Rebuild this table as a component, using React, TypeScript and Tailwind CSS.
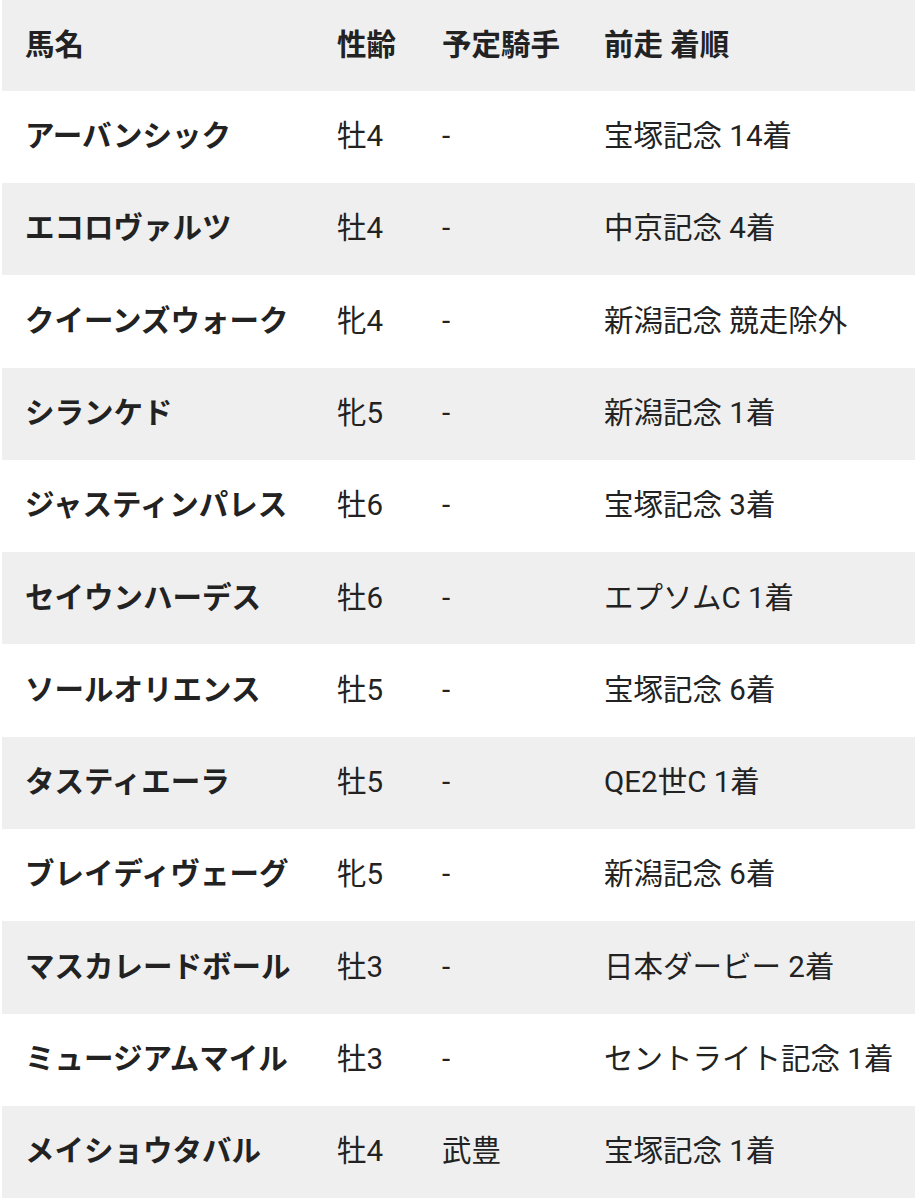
const rows = [
  { name: "アーバンシック", age: "牡4", jockey: "-", last: "宝塚記念 14着" },
  { name: "エコロヴァルツ", age: "牡4", jockey: "-", last: "中京記念 4着" },
  { name: "クイーンズウォーク", age: "牝4", jockey: "-", last: "新潟記念 競走除外" },
  { name: "シランケド", age: "牝5", jockey: "-", last: "新潟記念 1着" },
  { name: "ジャスティンパレス", age: "牡6", jockey: "-", last: "宝塚記念 3着" },
  { name: "セイウンハーデス", age: "牡6", jockey: "-", last: "エプソムC 1着" },
  { name: "ソールオリエンス", age: "牡5", jockey: "-", last: "宝塚記念 6着" },
  { name: "タスティエーラ", age: "牡5", jockey: "-", last: "QE2世C 1着" },
  { name: "ブレイディヴェーグ", age: "牝5", jockey: "-", last: "新潟記念 6着" },
  { name: "マスカレードボール", age: "牡3", jockey: "-", last: "日本ダービー 2着" },
  { name: "ミュージアムマイル", age: "牡3", jockey: "-", last: "セントライト記念 1着" },
  { name: "メイショウタバル", age: "牡4", jockey: "武豊", last: "宝塚記念 1着" },
];

const font = "font-['Roboto','Noto_Sans_CJK_JP',sans-serif]";

export default function App() {
  return (
    <div className={`w-[915px] h-[1200px] bg-white text-[#222] text-[29.5px] leading-none ${font}`}>
      <div className="ml-[2px] pl-[23px] h-[90.7px] bg-[#efefef] grid grid-cols-[312px_105px_162px_1fr] items-center font-bold whitespace-nowrap">
        <div>馬名</div>
        <div>性齢</div>
        <div>予定騎手</div>
        <div>前走 着順</div>
      </div>
      {rows.map((r, i) => (
        <div
          key={r.name}
          className={`ml-[2px] pl-[23px] h-[92.3px] grid grid-cols-[312px_105px_162px_1fr] items-center whitespace-nowrap ${
            i % 2 === 1 ? "bg-[#efefef]" : "bg-white"
          }`}
        >
          <div className="font-bold">{r.name}</div>
          <div>{r.age}</div>
          <div>{r.jockey}</div>
          <div>{r.last}</div>
        </div>
      ))}
    </div>
  );
}
